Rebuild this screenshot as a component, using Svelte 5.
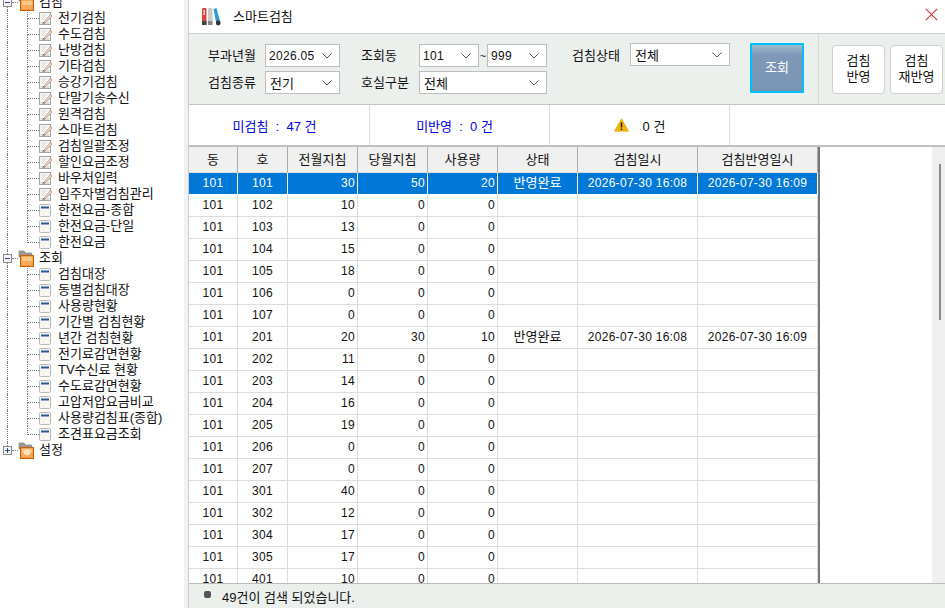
<script>
  const root = [
    { name: '검침', open: true, kids: [
      ['전기검침','p'],['수도검침','p'],['난방검침','p'],['기타검침','p'],['승강기검침','p'],['단말기송수신','p'],['원격검침','p'],['스마트검침','p'],['검침일괄조정','p'],['할인요금조정','p'],['바우처입력','p'],['입주자별검침관리','p'],['한전요금-종합','w'],['한전요금-단일','w'],['한전요금','w']
    ]},
    { name: '조회', open: true, kids: [
      ['검침대장','w'],['동별검침대장','w'],['사용량현황','w'],['기간별 검침현황','w'],['년간 검침현황','w'],['전기료감면현황','w'],['TV수신료 현황','w'],['수도료감면현황','w'],['고압저압요금비교','w'],['사용량검침표(종합)','w'],['조견표요금조회','w']
    ]},
    { name: '설정', open: false, kids: [] }
  ];
  const heads = ['동','호','전월지침','당월지침','사용량','상태','검침일시','검침반영일시'];
  const rows = [
    [101,30,50,20,'반영완료','2026-07-30 16:08','2026-07-30 16:09'],
    [102,10,0,0],[103,13,0,0],[104,15,0,0],[105,18,0,0],[106,0,0,0],[107,0,0,0],
    [201,20,30,10,'반영완료','2026-07-30 16:08','2026-07-30 16:09'],
    [202,11,0,0],[203,14,0,0],[204,16,0,0],[205,19,0,0],[206,0,0,0],[207,0,0,0],
    [301,40,0,0],[302,12,0,0],[304,17,0,0],[305,17,0,0],[401,10,0,0]
  ];
</script>

{#snippet chevron()}
  <svg class="chev" width="10" height="6" viewBox="0 0 10 6"><path d="M0.5 0.5 L5 5 L9.5 0.5" fill="none" stroke="#555" stroke-width="1"/></svg>
{/snippet}

{#snippet folder(open)}
  <svg class="folder" width="16" height="17" viewBox="0 0 16 17">
    <path d="M1 1 h5 l1.5 2 h6 v4 H1z" fill="#9a9a9a" stroke="#7b7b7b" stroke-width=".7"/>
    <rect x="2.5" y="5.5" width="13" height="11" fill="#f08a1c" stroke="#c8620a"/>
    <rect x="3.5" y="6.5" width="11" height="4.5" fill="#fcc88a"/>
    <rect x="3.5" y="11" width="11" height="4.5" fill="#f9a85c"/>
    {#if !open}<circle cx="9" cy="10.5" r="2.5" fill="#fde3c0" stroke="#fff" stroke-width=".6"/>{/if}
  </svg>
{/snippet}

{#snippet pen()}
  <svg class="ico" width="14" height="13" viewBox="0 0 14 13">
    <rect x=".5" y=".5" width="11" height="12" fill="#f6f6f2" stroke="#a4a4a0"/>
    <rect x="1.5" y="10" width="9" height="2" fill="#deded8"/>
    <path d="M2.5 3h5M2.5 5h4M2.5 7h3" stroke="#d4d4ce" stroke-width=".8"/>
    <path d="M4.5 10.5 L11.5 2.5 L13 4 L6 11 L4 11.6z" fill="#f2ecd8" stroke="#a56f66" stroke-width=".7"/>
    <path d="M4 11.6 L4.6 10 L5.9 11.1z" fill="#6b4b3e"/>
  </svg>
{/snippet}

{#snippet win()}
  <svg class="ico" width="14" height="13" viewBox="0 0 14 13">
    <rect x=".5" y=".5" width="11" height="12" rx="1" fill="#f5f5f3" stroke="#b9b9b5"/>
    <rect x="2" y="2.5" width="8" height="2" fill="#2b5a9a"/>
  </svg>
{/snippet}

<div class="app">
  <aside class="side">
    <div class="tree">
      {#each root as f, fi}
        <div class="node rootnode" class:last={fi === root.length - 1} class:first={fi === 0}>
          <span class="exp">
            <svg width="9" height="9" viewBox="0 0 9 9">
              <rect x=".5" y=".5" width="8" height="8" fill="#f4f4f4" stroke="#8d8d8d"/>
              <path d="M2 4.5h5" stroke="#2b4a8c"/>
              {#if !f.open}<path d="M4.5 2v5" stroke="#2b4a8c"/>{/if}
            </svg>
          </span>
          {@render folder(f.open)}
          <span class="rootlab">{f.name}</span>
        </div>
        {#each f.kids as k, i}
          <div class="node kid" class:lastkid={i === f.kids.length - 1}>
            <span class="stem"></span>
            {#if k[1] === 'p'}{@render pen()}{:else}{@render win()}{/if}
            <span class="lab">{k[0]}</span>
          </div>
        {/each}
      {/each}
    </div>
  </aside>

  <main class="main">
    <header class="title">
      <svg class="logo" width="20" height="19" viewBox="0 0 20 19">
        <rect x="1" y="1" width="4.5" height="17" rx="1" fill="#d9453a"/>
        <rect x="1" y="14" width="4.5" height="4" fill="#444"/>
        <rect x="2.4" y="3" width="1.6" height="5" fill="#f3d0c8"/>
        <rect x="7" y="1" width="4.5" height="17" rx="1" fill="#c9c9c9"/>
        <rect x="7" y="14" width="4.5" height="4" fill="#888"/>
        <path d="M12.5 2 L15.5 1 L19.5 16 L15.5 17.5z" fill="#2d9ad6"/>
        <circle cx="17.2" cy="16" r="2.4" fill="#333"/>
      </svg>
      <span class="ttext">스마트검침</span>
      <svg class="close" width="13" height="13" viewBox="0 0 13 13"><path d="M.8.8 12.2 12.2M12.2.8.8 12.2" stroke="#c8393a" stroke-width="1.1"/></svg>
    </header>

    <section class="filters">
      <div class="fields">
        <span class="lbl">부과년월</span>
        <div class="sel"><span class="num">2026.05</span>{@render chevron()}</div>
        <span class="lbl lbl2">조회동</span>
        <div class="pair">
          <div class="sel"><span class="num">101</span>{@render chevron()}</div>
          <span class="tilde">~</span>
          <div class="sel"><span class="num">999</span>{@render chevron()}</div>
        </div>
        <span class="lbl lbl3">검침상태</span>
        <div class="sel up"><span class="cjk">전체</span>{@render chevron()}</div>

        <span class="lbl">검침종류</span>
        <div class="sel"><span class="cjk">전기</span>{@render chevron()}</div>
        <span class="lbl lbl2">호실구분</span>
        <div class="sel"><span class="cjk">전체</span>{@render chevron()}</div>
      </div>
      <button class="search">조회</button>
      <div class="vline"></div>
      <button class="act first">검침<br />반영</button>
      <button class="act">검침<br />재반영</button>
    </section>

    <section class="summary">
      <div class="sum blue">미검침&nbsp;&nbsp;:&nbsp;&nbsp;47 건</div>
      <div class="sum blue">미반영&nbsp;&nbsp;:&nbsp;&nbsp;0 건</div>
      <div class="sum warn">
        <svg width="15" height="14" viewBox="0 0 15 14"><path d="M7.5 .8 14.5 13.2H.5z" fill="#f7b500" stroke="#d99a00" stroke-width=".6"/><path d="M7.5 4.5v5M7.5 10.5v1.6" stroke="#222" stroke-width="1.5"/></svg>
        <span>0 건</span>
      </div>
    </section>

    <section class="gridwrap">
      <div class="grid">
        <table>
          <colgroup>
            <col class="c49"/><col class="c50"/><col class="c70"/><col class="c70"/><col class="c70"/><col class="c80"/><col class="c120"/><col class="c120"/>
          </colgroup>
          <thead>
            <tr>{#each heads as h}<th>{h}</th>{/each}</tr>
          </thead>
          <tbody>
            {#each rows as r, i}
              <tr class:sel-row={i === 0}>
                <td class="c">101</td>
                <td class="c">{r[0]}</td>
                <td class="r">{r[1]}</td>
                <td class="r">{r[2]}</td>
                <td class="r">{r[3]}</td>
                <td class="c">{r[4] ?? ''}</td>
                <td class="c">{r[5] ?? ''}</td>
                <td class="c">{r[6] ?? ''}</td>
              </tr>
            {/each}
          </tbody>
        </table>
      </div>
      <div class="blank"></div>
      <div class="sb"><div class="thumb"></div></div>
    </section>

    <footer class="status">
      <span class="dot"></span>
      <span>49건이 검색 되었습니다.</span>
    </footer>
  </main>
</div>

<style>
  :global(body) { margin: 0; background: #fff; }
  .app {
    width: 945px; height: 608px; display: flex; overflow: hidden;
    font-family: "Liberation Sans", "Noto Sans CJK KR", sans-serif; font-size: 13px; color: #111;
  }
  .side { width: 188px; box-sizing: border-box; flex: none; border-right: 4px solid #f0f0f0; overflow: hidden; }
  .tree { margin-top: -6px; }
  .node { height: 16px; display: flex; align-items: center; position: relative; line-height: 16px; white-space: nowrap; }
  .rootnode { padding-left: 3px; }
  .rootnode::before { content: ""; position: absolute; left: 7px; top: 0; bottom: 0; border-left: 1px dotted #777; }
  .rootnode.first::before { top: 8px; }
  .rootnode.last::before { bottom: 8px; }
  .rootnode::after { content: ""; position: absolute; left: 12px; width: 6px; top: 8px; border-top: 1px dotted #777; }
  .exp { width: 9px; height: 9px; display: block; position: relative; z-index: 1; line-height: 0; }
  .folder { margin-left: 6px; flex: none; position: relative; z-index: 1; }
  .rootlab { margin-left: 5px; }
  .kid { padding-left: 39px; }
  .kid::before { content: ""; position: absolute; left: 7px; top: 0; bottom: 0; border-left: 1px dotted #777; }
  .kid::after { content: ""; position: absolute; left: 27px; top: 0; height: 8px; width: 11px; border-left: 1px dotted #777; border-bottom: 1px dotted #777; }
  .stem { position: absolute; left: 27px; top: 8px; bottom: 0; border-left: 1px dotted #777; }
  .lastkid .stem { display: none; }
  .ico { flex: none; }
  .lab { margin-left: 5px; }

  .main { flex: 1; min-width: 0; display: flex; flex-direction: column; border-left: 1px solid #ccc; }
  .title { height: 33px; flex: none; display: flex; align-items: center; padding: 0 7px 0 12px; box-sizing: border-box; }
  .ttext { margin-left: 12px; padding-bottom: 2px; }
  .close { margin-left: auto; margin-top: -5px; }
  .filters {
    height: 72px; flex: none; box-sizing: border-box; display: flex; align-items: flex-start;
    background: #ebf0ed; border-top: 1px solid #ccc; border-bottom: 1px solid #c4c4c4; padding: 10px 0 0 19px;
  }
  .fields { display: grid; grid-template-columns: 57px 75px 79px 128px 83px 100px; grid-template-rows: 23px 23px; row-gap: 4px; align-items: center; flex: none; }
  .lbl { white-space: nowrap; padding-bottom: 2px; }
  .lbl2 { padding-left: 21px; }
  .lbl3 { padding-left: 25px; }
  .sel {
    box-sizing: border-box; height: 23px; background: #fff; border: 1px solid #bdbdbd; flex: 1;
    display: flex; align-items: center; padding: 0 7px 0 3px; justify-content: space-between;
  }
  .sel .cjk { padding-left: 1px; }
  .num { letter-spacing: .3px; font-size: 12px; }
  .up { position: relative; top: -1px; }
  .pair { display: flex; align-items: center; }
  .tilde { width: 8px; text-align: center; font-size: 11px; flex: none; }
  .chev { flex: none; }
  .search {
    width: 54px; height: 50px; margin: -1px 0 0 20px; padding: 0 0 3px; box-sizing: border-box; border: 2px solid #00bfff; border-radius: 1px;
    background: linear-gradient(#a3bbd0 0, #7f98b6 10px, #7a94b4 100%); color: #fff; font: inherit; flex: none;
  }
  .vline { width: 1px; height: 70px; margin: -10px 0 0 14px; background: #d9d9d9; flex: none; }
  .act {
    width: 53px; height: 49px; margin: 1px 0 0 5px; padding: 0 0 2px; box-sizing: border-box; border: 1px solid #cfcfcf; border-radius: 4px;
    background: #fff; color: #111; font: inherit; line-height: 16px; flex: none;
  }
  .act.first { margin-left: 13px; }
  .summary { height: 42px; flex: none; display: flex; box-sizing: border-box; border-bottom: 2px solid #c0c0c0; padding-left: 1px; }
  .sum { width: 180px; height: 40px; display: flex; align-items: center; justify-content: center; box-sizing: border-box; border-right: 1px solid #ddd; white-space: nowrap; }
  .sum.blue { padding-right: 10px; }
  .warn { gap: 14px; }
  .blue { color: #0000e6; }
  .gridwrap { flex: 1; min-height: 0; display: flex; overflow: hidden; }
  .grid { width: 629px; flex: none; border-right: 2px solid #777; overflow: hidden; }
  table { border-collapse: separate; border-spacing: 0; table-layout: fixed; width: 629px; }
  .c49 { width: 49px; }
  .c50 { width: 50px; }
  .c70 { width: 70px; }
  .c80 { width: 80px; }
  .c120 { width: 120px; }
  th { height: 26px; box-sizing: border-box; padding: 0 0 2px; background: #f0f0f0; border-right: 1px solid #aaa; border-bottom: 1px solid #ddd; font-weight: 400; }
  td { height: 22px; box-sizing: border-box; padding: 0 2px 2px; border-right: 1px solid #ddd; border-bottom: 1px solid #ddd; font-size: 12px; letter-spacing: .3px; line-height: 14px; white-space: nowrap; overflow: hidden; }
  td:nth-child(6) { font-size: 13px; letter-spacing: 0; }
  .c { text-align: center; }
  .r { text-align: right; }
  .sel-row td { background: #0078d7; color: #fff; border-right-color: #fff; border-bottom-color: #fff; }
  .blank { flex: 1; }
  .sb { width: 13px; flex: none; background: #efefef; position: relative; }
  .thumb { position: absolute; left: 7px; top: 17px; width: 2px; height: 156px; background: #8a8a8a; }
  .status { height: 25px; flex: none; box-sizing: border-box; background: #ebf0ed; border-top: 1px solid #bbb; display: flex; align-items: center; padding-left: 15px; }
  .dot { width: 7px; height: 7px; border-radius: 2px; background: #555; margin-right: 11px; position: relative; top: -2px; }
</style>
